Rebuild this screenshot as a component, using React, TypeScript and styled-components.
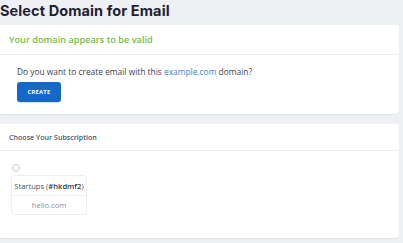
import React from 'react'
import styled, { createGlobalStyle } from 'styled-components'

const GlobalStyle = createGlobalStyle`
  html, body {
    margin: 0;
    padding: 0;
    background: #eef0f4;
  }
  body {
    font-family: 'Open Sans', 'Liberation Sans', sans-serif;
  }
`

const App: React.FC = () => {
  return (
    <Page>
      <GlobalStyle />
      <Title>Select Domain for Email</Title>

      <Card>
        <CardHeader>
          <ValidText>Your domain appears to be valid</ValidText>
        </CardHeader>
        <CreateBody>
          <Question>
            Do you want to create email with this <Domain>example.com</Domain> domain?
          </Question>
          <CreateButton>CREATE</CreateButton>
        </CreateBody>
      </Card>

      <Card>
        <CardHeader small>
          <SectionTitle>Choose Your Subscription</SectionTitle>
        </CardHeader>
        <PlanBody>
          <Radio />
          <PlanBox>
            <PlanName>
              Startups (<b>#hkdmf2</b>)
            </PlanName>
            <PlanDomain>hello.com</PlanDomain>
          </PlanBox>
        </PlanBody>
      </Card>
    </Page>
  )
}

export default App

const Page = styled.div`
  padding: 2px 4px 4px 0;
  box-sizing: border-box;
  width: 403px;
  height: 243px;
  overflow: hidden;
`

const Title = styled.h1`
  margin: 0 0 5px;
  font-family: 'Inter', 'Liberation Sans', sans-serif;
  font-weight: 700;
  font-size: 14.5px;
  line-height: 18px;
  color: #1f2230;
  letter-spacing: 0.1px;
`

const Card = styled.div`
  background: #ffffff;
  border-radius: 0 3px 3px 0;
  box-shadow: 0 1px 1px rgba(30, 40, 70, 0.08);
  margin-bottom: 10px;
`

const CardHeader = styled.div<{ small?: boolean }>`
  display: flex;
  align-items: center;
  height: ${(p) => (p.small ? '26px' : '29px')};
  padding: 0 9px;
  border-bottom: 1px solid #eef0f4;
`

const ValidText = styled.span`
  color: #72bf3c;
  font-weight: 600;
  font-size: 9.2px;
`

const CreateBody = styled.div`
  padding: 11px 17px 12px;
`

const Question = styled.p`
  margin: 0 0 4px;
  font-size: 8.4px;
  line-height: 12px;
  color: #3b4150;
`

const Domain = styled.span`
  color: #3d7fd1;
`

const CreateButton = styled.button`
  display: flex;
  align-items: center;
  justify-content: center;
  width: 44px;
  height: 20px;
  padding: 0;
  border: none;
  border-radius: 3px;
  background: #1468c7;
  color: #ffffff;
  font-family: 'Open Sans', 'Liberation Sans', sans-serif;
  font-weight: 700;
  font-size: 5.8px;
  letter-spacing: 0.3px;
  box-shadow: 0 1px 1px rgba(0, 0, 0, 0.15);
`

const SectionTitle = styled.span`
  color: #4b5568;
  font-weight: 600;
  font-size: 7.1px;
`

const PlanBody = styled.div`
  height: 87px;
  padding: 13px 11px 0;
  box-sizing: border-box;
`

const Radio = styled.div`
  width: 6px;
  height: 6px;
  border: 1px solid #c9ccd3;
  border-radius: 50%;
  margin: 0 0 3px 1px;
`

const PlanBox = styled.div`
  width: 74px;
  border: 1px solid #eceef2;
  border-radius: 3px;
`

const PlanName = styled.div`
  height: 19px;
  display: flex;
  align-items: center;
  justify-content: center;
  border-bottom: 1px solid #eceef2;
  font-size: 7.6px;
  color: #4b5568;
  white-space: nowrap;

  b {
    font-weight: 600;
    color: #343b4b;
  }
`

const PlanDomain = styled.div`
  height: 18px;
  display: flex;
  align-items: center;
  justify-content: center;
  font-size: 7.6px;
  color: #8a909c;
`
